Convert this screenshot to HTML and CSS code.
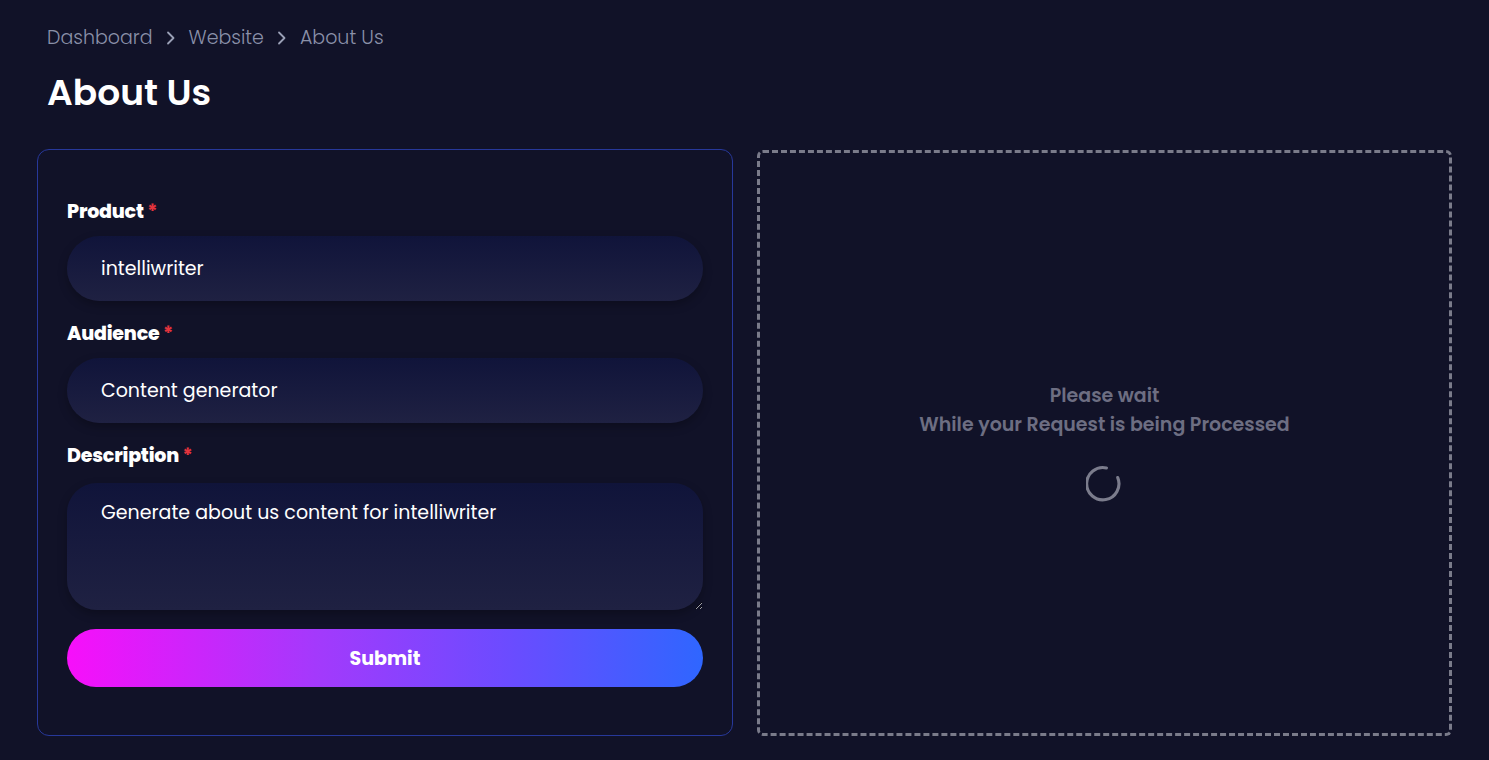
FILE: index.html
```html
<!DOCTYPE html>
<html lang="en">
<head>
<meta charset="utf-8">
<title>About Us</title>
<link rel="stylesheet" href="styles.css">
</head>
<body>
<main class="page">
  <nav class="crumbs">
    <span class="crumb">Dashboard</span>
    <svg class="chev" viewBox="0 0 10 14" width="10" height="14"><path d="M2 1.5 L7.5 7 L2 12.5" fill="none" stroke="currentColor" stroke-width="1.8" stroke-linecap="round" stroke-linejoin="round"/></svg>
    <span class="crumb">Website</span>
    <svg class="chev" viewBox="0 0 10 14" width="10" height="14"><path d="M2 1.5 L7.5 7 L2 12.5" fill="none" stroke="currentColor" stroke-width="1.8" stroke-linecap="round" stroke-linejoin="round"/></svg>
    <span class="crumb">About Us</span>
  </nav>
  <h1 class="title">About Us</h1>

  <section class="grid">
    <form class="card">
      <label class="label">Product <span class="req">*</span></label>
      <input class="field" type="text" value="intelliwriter">
      <label class="label">Audience <span class="req">*</span></label>
      <input class="field" type="text" value="Content generator">
      <label class="label">Description <span class="req">*</span></label>
      <textarea class="field area" spellcheck="false">Generate about us content for intelliwriter</textarea>
      <button class="submit" type="button">Submit</button>
    </form>

    <div class="result">
      <p class="wait">Please wait</p>
      <p class="wait">While your Request is being Processed</p>
      <svg class="spinner" viewBox="0 0 40 40" width="38" height="38">
        <path d="M33.4 13.2 A17 17 0 1 1 21.5 3.1" fill="none" stroke="#7b7c8c" stroke-width="3.3" stroke-linecap="round"/>
      </svg>
    </div>
  </section>
</main>
</body>
</html>
```

FILE: styles.css
```css
* { box-sizing: border-box; }
html, body { margin: 0; padding: 0; }
body {
  background: #111228;
  font-family: "Poppins", "Noto Sans", "Open Sans", sans-serif;
  color: #fff;
  width: 1489px;
  height: 760px;
  overflow: hidden;
}
.page {
  padding: 24px 37px 0 37px;
}
.crumbs {
  display: flex;
  align-items: center;
  gap: 12px;
  padding-left: 10px;
  color: #8a90a8;
  font-size: 19px;
  font-weight: 300;
  line-height: 28px;
  height: 28px;
}
.chev { color: #9aa0b6; margin: 0 1px; }
.title {
  margin: 16px 0 0 10px;
  font-size: 36px;
  font-weight: 600;
  line-height: 50px;
  height: 50px;
}
.grid {
  display: grid;
  grid-template-columns: 696px 695px;
  gap: 24px;
  margin-top: 31px;
}
.card {
  border: 1px solid #27389a;
  border-radius: 12px;
  padding: 48px 29px 48px 29px;
  display: flex;
  flex-direction: column;
  height: 587px;
}
.label {
  font-size: 19px;
  font-weight: 800;
  line-height: 28px;
  margin-bottom: 10px;
  letter-spacing: -0.2px;
}
.req { color: #e5343d; font-weight: 700; }
.field {
  display: block;
  width: 100%;
  height: 65px;
  border: none;
  outline: none;
  border-radius: 33px;
  padding: 0 34px;
  background: linear-gradient(180deg, #10143a 0%, #1f2142 100%);
  color: #fff;
  font-family: inherit;
  font-size: 19px;
  box-shadow: 0 4px 10px rgba(0,0,0,0.25);
  margin-bottom: 19px;
}
.area {
  height: 128px;
  border-radius: 30px;
  padding: 16px 34px;
  resize: vertical;
  line-height: 28px;
  margin-bottom: 19px;
  margin-top: 3px;
}
.submit {
  height: 58px;
  border: none;
  border-radius: 29px;
  background: linear-gradient(90deg, #f70ffa 0%, #a23afc 40%, #6a4cff 70%, #2f66ff 100%);
  color: #fff;
  font-family: inherit;
  font-size: 19px;
  font-weight: 700;
}
.result {
  border: 3px dashed #7a7b8a;
  border-radius: 6px;
  height: 586px;
  margin-top: 1px;
  padding-bottom: 3px;
  display: flex;
  flex-direction: column;
  align-items: center;
  justify-content: center;
  color: #6d6e82;
}
.wait {
  margin: 0;
  font-size: 19px;
  font-weight: 600;
  line-height: 29px;
}
.spinner { margin-top: 26px; }
```
